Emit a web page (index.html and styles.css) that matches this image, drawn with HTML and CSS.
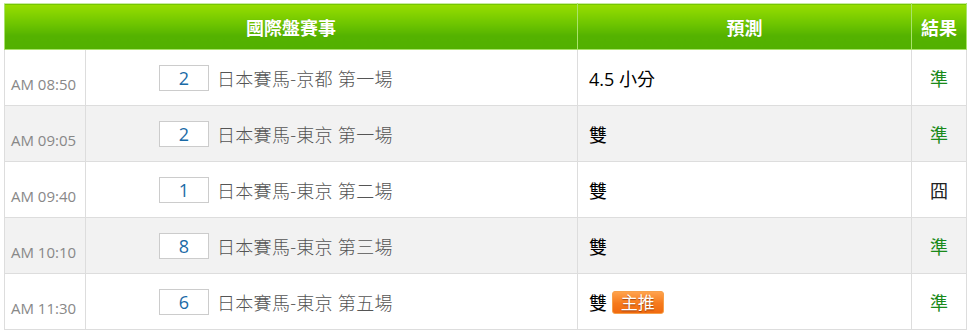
FILE: index.html
```html
<!DOCTYPE html>
<html lang="zh-Hant">
<head>
<meta charset="utf-8">
<link rel="stylesheet" href="styles.css">
</head>
<body>
<div class="wrap">
<table class="board">
  <colgroup>
    <col class="c-time"><col class="c-event"><col class="c-pred"><col class="c-res">
  </colgroup>
  <thead>
    <tr>
      <th colspan="2">國際盤賽事</th>
      <th>預測</th>
      <th>結果</th>
    </tr>
  </thead>
  <tbody>
    <tr>
      <td class="time">AM 08:50</td>
      <td class="event"><span class="num">2</span><span class="name">日本賽馬-京都 第一場</span></td>
      <td class="pred">4.5 小分</td>
      <td class="res ok">準</td>
    </tr>
    <tr class="alt">
      <td class="time">AM 09:05</td>
      <td class="event"><span class="num">2</span><span class="name">日本賽馬-東京 第一場</span></td>
      <td class="pred">雙</td>
      <td class="res ok">準</td>
    </tr>
    <tr>
      <td class="time">AM 09:40</td>
      <td class="event"><span class="num">1</span><span class="name">日本賽馬-東京 第二場</span></td>
      <td class="pred">雙</td>
      <td class="res bad">囧</td>
    </tr>
    <tr class="alt">
      <td class="time">AM 10:10</td>
      <td class="event"><span class="num">8</span><span class="name">日本賽馬-東京 第三場</span></td>
      <td class="pred">雙</td>
      <td class="res ok">準</td>
    </tr>
    <tr>
      <td class="time">AM 11:30</td>
      <td class="event"><span class="num">6</span><span class="name">日本賽馬-東京 第五場</span></td>
      <td class="pred">雙 <span class="badge">主推</span></td>
      <td class="res ok">準</td>
    </tr>
  </tbody>
</table>
</div>
</body>
</html>
```

FILE: styles.css
```css
html, body {
  margin: 0;
  padding: 0;
  background: #fff;
}
.wrap {
  padding: 3px 5px 0 4px;
}
.board {
  width: 962px;
  border-collapse: collapse;
  table-layout: fixed;
  font-family: "Open Sans", "Noto Sans CJK TC", sans-serif;
}
.c-time { width: 81px; }
.c-event { width: 492px; }
.c-pred { width: 334px; }
.c-res { width: 55px; }

.board th {
  height: 45px;
  padding: 0;
  color: #fff;
  font-size: 18px;
  font-weight: bold;
  text-align: center;
  background: linear-gradient(to bottom, #98de00 0%, #6cc400 45%, #54b200 70%, #52b000 100%);
  border: 1px solid #a9e36a;
  border-top-color: #c9eaa0;
  text-shadow: 0 0 1px rgba(0,0,0,0.15);
}
.board td {
  height: 55px;
  padding: 0;
  border: 1px solid #dddddd;
  vertical-align: middle;
}
.board tr.alt td {
  background: #f2f2f2;
}
.time {
  font-size: 15px;
  color: #888;
  padding: 12px 0 0 6px !important;
  box-sizing: border-box;
  white-space: nowrap;
}
.event {
  padding-left: 73px !important;
  white-space: nowrap;
}
.num {
  display: inline-block;
  width: 48px;
  height: 24px;
  line-height: 24px;
  border: 1px solid #cccccc;
  background: #fff;
  color: #1a6aa6;
  font-size: 18px;
  text-align: center;
  vertical-align: middle;
}
.name {
  display: inline-block;
  margin-left: 8px;
  color: #555;
  font-size: 18px;
  font-weight: 300;
  letter-spacing: 0.3px;
  vertical-align: middle;
}
.pred {
  padding-left: 11px !important;
  font-size: 18px;
  color: #000;
}
.res {
  text-align: center;
  font-size: 18px;
}
.res.ok { color: #1a8a1a; }
.res.bad { color: #222; }
.badge {
  display: inline-block;
  padding: 0 8px;
  height: 21px;
  line-height: 21px;
  font-size: 17px;
  color: #fff;
  border-radius: 3px;
  border: 1px solid #f7a04a;
  background: linear-gradient(to bottom, #ffa24c 0%, #f67a1c 55%, #f06a10 100%);
  text-shadow: 0 1px 1px rgba(120,40,0,0.7);
  vertical-align: 1px;
  margin-left: 0;
}
```
